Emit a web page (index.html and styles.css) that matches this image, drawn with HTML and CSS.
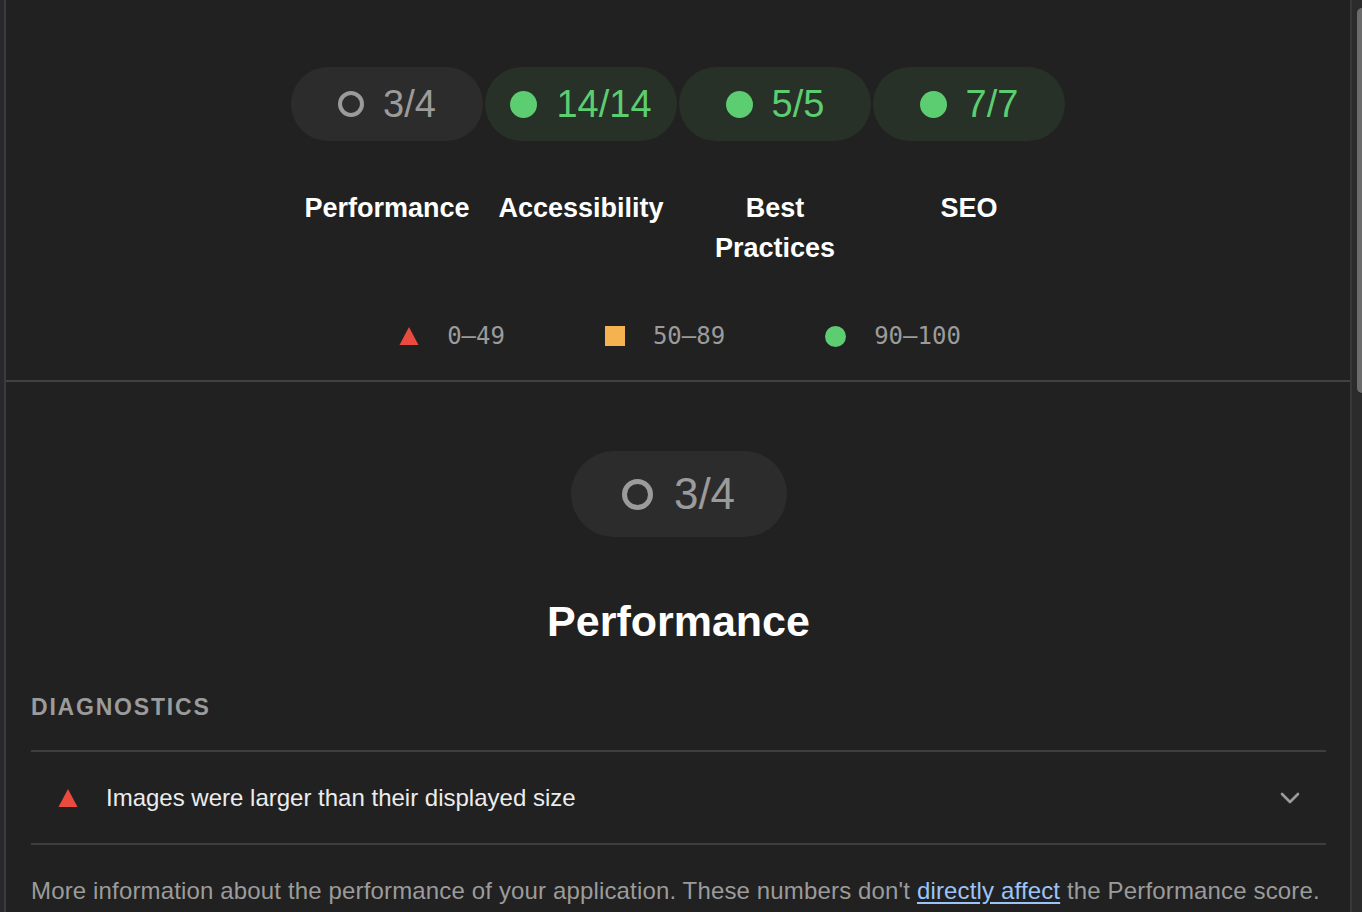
FILE: index.html
```html
<!DOCTYPE html>
<html lang="en">
<head>
<meta charset="utf-8">
<title>Lighthouse report</title>
<link rel="stylesheet" href="styles.css">
</head>
<body>
<div class="app">
  <main class="main">
    <section class="summary">
      <div class="gauges">
        <div class="gauge">
          <div class="pill pill-neutral"><span class="ring"></span><span class="score">3/4</span></div>
          <div class="gauge-label">Performance</div>
        </div>
        <div class="gauge">
          <div class="pill pill-pass"><span class="dot"></span><span class="score">14/14</span></div>
          <div class="gauge-label">Accessibility</div>
        </div>
        <div class="gauge">
          <div class="pill pill-pass"><span class="dot"></span><span class="score">5/5</span></div>
          <div class="gauge-label">Best<br>Practices</div>
        </div>
        <div class="gauge">
          <div class="pill pill-pass"><span class="dot"></span><span class="score">7/7</span></div>
          <div class="gauge-label">SEO</div>
        </div>
      </div>
      <div class="legend">
        <div class="legend-item">
          <svg class="legend-icon" viewBox="0 0 20 20" width="20" height="20"><polygon points="10,1 19.5,19 0.5,19" fill="#eb4a3f"/></svg>
          <span>0–49</span>
        </div>
        <div class="legend-item">
          <span class="square"></span>
          <span>50–89</span>
        </div>
        <div class="legend-item">
          <span class="legend-dot"></span>
          <span>90–100</span>
        </div>
      </div>
    </section>

    <section class="category">
      <div class="big-pill"><span class="big-ring"></span><span class="big-score">3/4</span></div>
      <h1 class="category-title">Performance</h1>
      <div class="group-title">Diagnostics</div>
      <div class="audit">
        <svg class="audit-icon" viewBox="0 0 20 20" width="20" height="20"><polygon points="10,1 19.5,19 0.5,19" fill="#eb4a3f"/></svg>
        <span class="audit-text">Images were larger than their displayed size</span>
        <svg class="chevron" viewBox="0 0 20 12" width="20" height="12"><polyline points="2,2 10,10 18,2" fill="none" stroke="#9b9b9b" stroke-width="2.6" stroke-linecap="round" stroke-linejoin="round"/></svg>
      </div>
      <p class="note">More information about the performance of your application. These numbers don't <a href="#" class="link">directly affect</a> the Performance score.</p>
    </section>
  </main>
  <div class="scrollbar"><div class="thumb"></div></div>
</div>
</body>
</html>
```

FILE: styles.css
```css
html, body {
  margin: 0;
  padding: 0;
  height: 100%;
  overflow: hidden;
}

body {
  background: #28292d;
  font-family: "Liberation Sans", Arial, sans-serif;
  color: #e8e8e8;
}

.app {
  display: flex;
  margin-left: 4px;
  height: 912px;
  border-left: 2px solid #3b3b3b;
  background: #212121;
}

.main {
  flex: 1;
  min-width: 0;
}

.scrollbar {
  width: 10px;
  border-left: 2px solid #383838;
  background: #2b2b2b;
  padding-top: 8px;
  display: flex;
  justify-content: flex-end;
  align-items: flex-start;
}

.thumb {
  width: 5px;
  height: 385px;
  background: #6b6b6b;
  border-radius: 5px 0 0 5px;
}

/* summary */
.summary {
  padding-top: 67px;
  padding-bottom: 29px;
  border-bottom: 2px solid #424242;
}

.gauges {
  display: flex;
  justify-content: center;
  align-items: flex-start;
}

.gauge {
  width: 194px;
  display: flex;
  flex-direction: column;
  align-items: center;
}

.pill {
  width: 192px;
  height: 74px;
  border-radius: 37px;
  display: flex;
  align-items: center;
  justify-content: center;
  gap: 19px;
}

.pill-neutral {
  background: #2c2c2c;
  color: #9b9b9b;
}

.pill-pass {
  background: #273127;
  color: #5ccd71;
}

.ring {
  width: 18px;
  height: 18px;
  border: 4px solid #9b9b9b;
  border-radius: 50%;
}

.dot {
  width: 27px;
  height: 27px;
  border-radius: 50%;
  background: #5ccd71;
}

.score {
  font-size: 38px;
  line-height: 44px;
}

.gauge-label {
  margin-top: 47px;
  font-size: 27px;
  line-height: 40px;
  font-weight: 700;
  color: #ffffff;
  text-align: center;
}

.legend {
  margin-top: 53px;
  display: flex;
  justify-content: center;
  gap: 100px;
  padding-left: 4px;
  font-family: "DejaVu Sans Mono", monospace;
  font-size: 24px;
  line-height: 30px;
  color: #9b9b9b;
}

.legend-item {
  display: flex;
  align-items: center;
  gap: 28px;
}

.square {
  width: 20px;
  height: 20px;
  background: #f4b350;
}

.legend-dot {
  width: 21px;
  height: 21px;
  border-radius: 50%;
  background: #5ccd71;
}

/* category */
.category {
  padding: 69px 24px 0 25px;
  display: flex;
  flex-direction: column;
}

.big-pill {
  align-self: center;
  width: 216px;
  height: 86px;
  border-radius: 43px;
  background: #2c2c2c;
  color: #9b9b9b;
  display: flex;
  align-items: center;
  justify-content: center;
  gap: 21px;
}

.big-ring {
  width: 21px;
  height: 21px;
  border: 5px solid #9b9b9b;
  border-radius: 50%;
}

.big-score {
  font-size: 44px;
  line-height: 50px;
}

.category-title {
  margin: 59px 0 0;
  text-align: center;
  font-size: 43px;
  line-height: 50px;
  font-weight: 700;
  color: #ffffff;
}

.group-title {
  margin-top: 47px;
  font-size: 23px;
  line-height: 28px;
  font-weight: 700;
  letter-spacing: 1.8px;
  text-transform: uppercase;
  color: #9b9b9b;
  padding-bottom: 29px;
  border-bottom: 2px solid #3e3e3e;
}

.audit {
  display: flex;
  align-items: center;
  height: 91px;
  padding-left: 27px;
  padding-right: 26px;
  border-bottom: 2px solid #3e3e3e;
}

.audit-icon {
  flex: none;
}

.audit-text {
  margin-left: 28px;
  flex: 1;
  font-size: 24px;
  color: #ececec;
}

.chevron {
  flex: none;
}

.note {
  margin: 31px 0 0;
  font-size: 24px;
  line-height: 30px;
  letter-spacing: 0.15px;
  color: #9b9b9b;
  white-space: nowrap;
}

.link {
  color: #9cc4f8;
  text-decoration: underline;
  text-underline-offset: 3px;
}
```
